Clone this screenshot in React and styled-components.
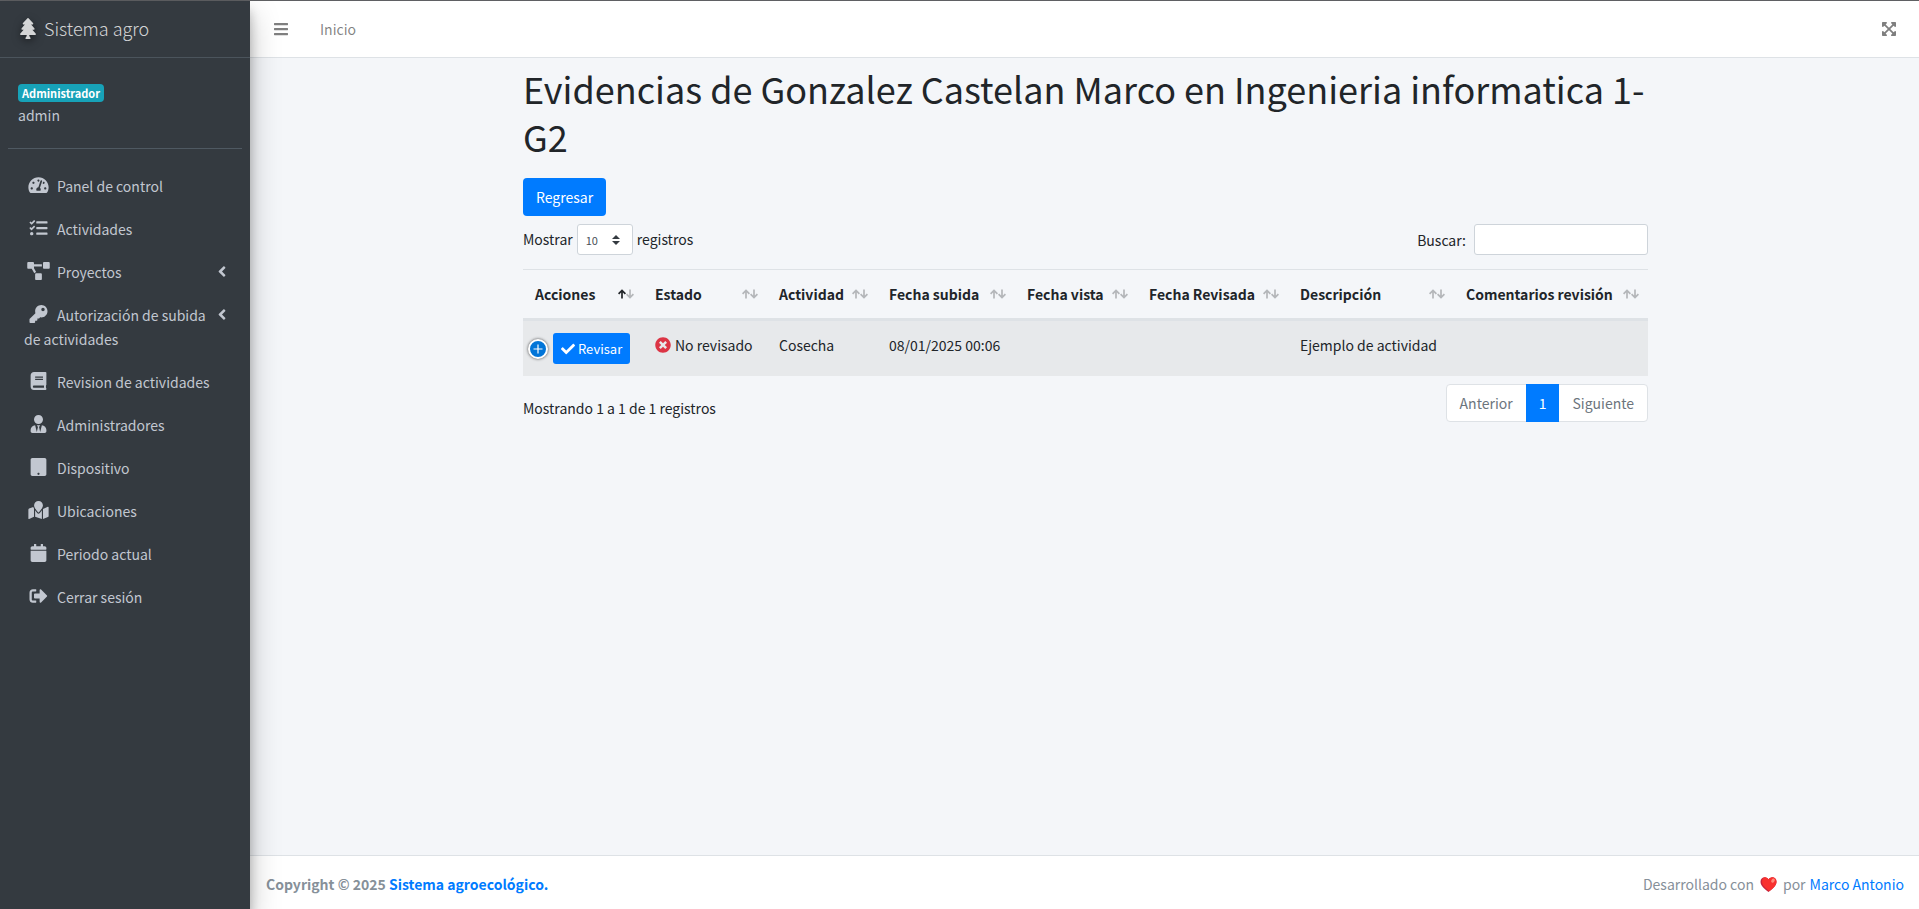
import React, { useState } from 'react'
import styled, { createGlobalStyle } from 'styled-components'
import {
    FaAngleLeft,
    FaBars,
    FaBook,
    FaCalendar,
    FaCheck,
    FaExpandArrowsAlt,
    FaKey,
    FaMapMarked,
    FaProjectDiagram,
    FaSignOutAlt,
    FaTablet,
    FaTachometerAlt,
    FaTasks,
    FaTimesCircle,
    FaTree,
    FaUserTie,
} from 'react-icons/fa'

const GlobalStyle = createGlobalStyle`
    *, *::before, *::after {
        box-sizing: border-box;
    }

    body {
        margin: 0;
        font-family: 'Source Sans Pro', 'Noto Sans CJK SC', 'Noto Sans', sans-serif;
        font-size: 14px;
        line-height: 24px;
        color: #212529;
        background: #f4f6f9;
    }

    button, input, select {
        font: inherit;
    }

    a {
        color: #007bff;
        text-decoration: none;
    }
`

const Wrapper = styled.div`
    display: flex;
    min-height: 100vh;
    border-top: 1px solid #5f6063;
`

/* Sidebar */

const Sidebar = styled.aside`
    position: relative;
    flex: 0 0 250px;
    background: #343a40;
    box-shadow: 0 14px 28px rgba(0, 0, 0, 0.25), 0 10px 10px rgba(0, 0, 0, 0.22);
`

const Brand = styled.a`
    display: flex;
    align-items: center;
    gap: 8px;
    height: 57px;
    padding: 0 20px 2px;
    border-bottom: 1px solid #4b545c;
    font-size: 18px;
    font-weight: 300;
    color: rgba(255, 255, 255, 0.8);

    svg {
        width: 16px;
        height: 21px;
        filter: drop-shadow(0 3px 4px rgba(0, 0, 0, 0.6));
    }
`

const UserPanel = styled.div`
    display: flex;
    flex-direction: column;
    align-items: flex-start;
    gap: 1px;
    margin: 0 8px;
    padding: 26px 10px 21px;
    border-bottom: 1px solid #4f5962;
    color: #c2c7d0;
`

const Badge = styled.span`
    padding: 0 4px;
    border-radius: 4px;
    font-size: 11px;
    font-weight: 700;
    line-height: 18px;
    color: #fff;
    background: #17a2b8;
`

const Menu = styled.ul`
    display: flex;
    flex-direction: column;
    gap: 3px;
    margin: 0;
    padding: 17px 8px;
    list-style: none;
`

const MenuLink = styled.a`
    display: flex;
    align-items: flex-start;
    padding: 8px 14px 8px 16px;
    color: #c2c7d0;
`

const MenuText = styled.span`
    flex: 1;
`

const MenuIcon = styled.span`
    display: inline-flex;
    justify-content: center;
    width: 28px;
    margin-right: 5px;
    vertical-align: -2px;

    svg {
        width: 23px;
        height: 18px;
    }
`

const Chevron = styled(FaAngleLeft)`
    width: 12px;
    height: 17px;
    margin-top: 3px;
`

/* Page */

const Page = styled.div`
    flex: 1;
    min-width: 0;
    display: flex;
    flex-direction: column;
`

const Navbar = styled.header`
    display: flex;
    align-items: center;
    justify-content: space-between;
    height: 57px;
    padding: 0 22px 0 23px;
    border-bottom: 1px solid #dee2e6;
    background: #fff;
`

const NavGroup = styled.nav`
    display: flex;
    align-items: center;
    gap: 31px;

    a {
        color: rgba(0, 0, 0, 0.5);
    }
`

const IconButton = styled.button`
    display: flex;
    padding: 0;
    border: 0;
    font-size: 16px;
    color: rgba(0, 0, 0, 0.5);
    background: none;
    cursor: pointer;
`

const Content = styled.main`
    flex: 1;
    width: 100%;
    max-width: 1141px;
    margin: 0 auto;
    padding: 6px 7px 6px 9px;
`

const Title = styled.h1`
    margin: 0 0 18px;
    font-size: 36px;
    font-weight: 400;
    line-height: 48px;
`

const Button = styled.button`
    display: inline-flex;
    align-items: center;
    gap: 3px;
    height: ${({ $small }) => ($small ? '31px' : '38px')};
    padding: ${({ $small }) => ($small ? '0 8px' : '0 13px')};
    border: 0;
    border-radius: ${({ $small }) => ($small ? '3px' : '4px')};
    font-size: ${({ $small }) => ($small ? '13px' : '14px')};
    color: #fff;
    background: #007bff;
    cursor: pointer;

    svg {
        width: 14px;
        height: 14px;
    }
`

const Row = styled.div`
    display: flex;
    flex-wrap: wrap;
    align-items: ${({ $align }) => $align || 'center'};
    justify-content: space-between;
    margin-top: 8px;
`

const LengthLabel = styled.label`
    display: flex;
    align-items: baseline;
    gap: 4px;
`

const LengthSelect = styled.select`
    appearance: none;
    width: 56px;
    height: 31px;
    padding: 0 8px;
    border: 1px solid #ced4da;
    border-radius: 3px;
    font-size: 11px;
    color: #495057;
    background: #fff url("data:image/svg+xml,%3csvg xmlns='http://www.w3.org/2000/svg' width='4' height='5' viewBox='0 0 4 5'%3e%3cpath fill='%23343a40' d='M2 0L0 2h4zm0 5L0 3h4z'/%3e%3c/svg%3e") right 12px center / 8px 10px no-repeat;
`

const SearchLabel = styled.label`
    display: flex;
    align-items: center;
    gap: 8px;
`

const SearchInput = styled.input`
    width: 174px;
    height: 31px;
    padding: 4px 8px;
    border: 1px solid #ced4da;
    border-radius: 3px;
    background: #fff;
`

const Table = styled.table`
    width: 100%;
    margin-top: 14px;
    border-collapse: separate;
    border-spacing: 0;
    table-layout: fixed;
`

const Th = styled.th`
    width: ${({ $width }) => $width}px;
    padding: 12px 9px 12px 12px;
    border-top: 1px solid #dee2e6;
    border-bottom: 2px solid #dee2e6;
    text-align: left;
    font-weight: 700;
    white-space: nowrap;
`

const ThContent = styled.div`
    display: flex;
    align-items: center;
    justify-content: space-between;
`

const Td = styled.td`
    height: 56px;
    padding: 12px;
    border-top: 1px solid #dee2e6;
    vertical-align: top;
    background: #e7e9eb;
`

const ActionsTd = styled(Td)`
    padding: 12px 5px;
`

const Actions = styled.div`
    display: flex;
    align-items: center;
    gap: 5px;
`

const ExpandButton = styled.button`
    display: flex;
    align-items: center;
    justify-content: center;
    width: 20px;
    height: 20px;
    padding: 0;
    border: 2px solid #fff;
    border-radius: 50%;
    color: #fff;
    background: #0275d8;
    box-shadow: 0 0 3px #444;
    cursor: pointer;
`

const Status = styled.span`
    display: flex;
    align-items: center;
    gap: 4px;
    white-space: nowrap;

    svg {
        width: 16px;
        height: 16px;
        color: #dc3545;
    }
`

const Info = styled.div`
    padding-top: 12px;
`

const Pagination = styled.nav`
    display: flex;
    border: 1px solid #dee2e6;
    border-radius: 4px;
    background: #fff;
`

const PageButton = styled.button`
    height: 38px;
    margin: -1px 0;
    padding: 0 13px;
    border: 0;
    color: ${({ $active }) => ($active ? '#fff' : '#6c757d')};
    background: ${({ $active }) => ($active ? '#007bff' : 'transparent')};
`

const Footer = styled.footer`
    display: flex;
    justify-content: space-between;
    padding: 16px 15px 13px 16px;
    border-top: 1px solid #dee2e6;
    color: #869099;
    background: #fff;
`

const Credit = styled.div`
    display: flex;
    align-items: center;
    gap: 4px;

    svg {
        margin: 0 2px;
    }
`

const menu = [
    { icon: FaTachometerAlt, text: 'Panel de control' },
    { icon: FaTasks, text: 'Actividades' },
    { icon: FaProjectDiagram, text: 'Proyectos', children: true },
    { icon: FaKey, text: 'Autorización de subida de actividades', children: true },
    { icon: FaBook, text: 'Revision de actividades' },
    { icon: FaUserTie, text: 'Administradores' },
    { icon: FaTablet, text: 'Dispositivo' },
    { icon: FaMapMarked, text: 'Ubicaciones' },
    { icon: FaCalendar, text: 'Periodo actual' },
    { icon: FaSignOutAlt, text: 'Cerrar sesión' },
]

const columns = [
    { text: 'Acciones', width: 120, sorted: true },
    { text: 'Estado', width: 124 },
    { text: 'Actividad', width: 110 },
    { text: 'Fecha subida', width: 138 },
    { text: 'Fecha vista', width: 122 },
    { text: 'Fecha Revisada', width: 151 },
    { text: 'Descripción', width: 166 },
    { text: 'Comentarios revisión', width: 194 },
]

const SortArrows = ({ sorted }) => (
    <svg width="16" height="10" viewBox="0 0 16 10" fill="none" stroke="#212529" strokeWidth="1.7" aria-hidden="true">
        <path d="M4 9.5V1.4M0.6 4.8L4 1.4L7.4 4.8" opacity={sorted ? 1 : 0.3} />
        <path d="M12 0.5V8.6M8.6 5.2L12 8.6L15.4 5.2" opacity="0.3" />
    </svg>
)

const Heart = () => (
    <svg width="17" height="15" viewBox="0 0 17 15" aria-hidden="true">
        <path fill="#c8243c" d="M8.5 15C4 11.500 0.500 8.600 0.500 4.700C0.500 2 2.400 0.300 4.700 0.300C6.400 0.300 7.800 1.200 8.500 2.600C9.200 1.200 10.600 0.300 12.300 0.300C14.600 0.300 16.500 2 16.500 4.700C16.500 8.600 13 11.500 8.500 15Z" />
        <path fill="#f8312f" d="M9.500 14C5.500 11 2 8.300 2 4.700C2 2 3.600 0.300 5.200 0.300C6.700 0.300 7.900 1.200 8.500 2.600C9.200 1.200 10.600 0.300 12.300 0.300C14.600 0.300 16.500 2 16.500 4.700C16.500 8.400 13.300 11.200 9.500 14Z" />
        <ellipse cx="13" cy="3.600" rx="1.600" ry="2.200" fill="#ff8a7a" transform="rotate(35 13 3.600)" />
    </svg>
)

const App = () => {
    const [search, setSearch] = useState('')
    const [length, setLength] = useState('10')

    return (
        <Wrapper>
            <GlobalStyle />
            <Sidebar>
                <Brand href="#">
                    <FaTree />
                    Sistema agro
                </Brand>
                <UserPanel>
                    <Badge>Administrador</Badge>
                    <span>admin</span>
                </UserPanel>
                <Menu>
                    {menu.map(({ icon: Icon, text, children }) => (
                        <li key={text}>
                            <MenuLink href="#">
                                <MenuText>
                                    <MenuIcon><Icon /></MenuIcon>
                                    {text}
                                </MenuText>
                                {children && <Chevron />}
                            </MenuLink>
                        </li>
                    ))}
                </Menu>
            </Sidebar>

            <Page>
                <Navbar>
                    <NavGroup>
                        <IconButton aria-label="Menú"><FaBars /></IconButton>
                        <a href="#">Inicio</a>
                    </NavGroup>
                    <IconButton aria-label="Pantalla completa"><FaExpandArrowsAlt /></IconButton>
                </Navbar>

                <Content>
                    <Title>Evidencias de Gonzalez Castelan Marco en Ingenieria informatica 1-G2</Title>
                    <Button>Regresar</Button>
                    <Row>
                        <LengthLabel>
                            Mostrar
                            <LengthSelect value={length} onChange={(e) => setLength(e.target.value)}>
                                <option>10</option>
                                <option>25</option>
                                <option>50</option>
                                <option>100</option>
                            </LengthSelect>
                            registros
                        </LengthLabel>
                        <SearchLabel>
                            Buscar:
                            <SearchInput
                                type="search"
                                value={search}
                                onChange={(e) => setSearch(e.target.value)}
                            />
                        </SearchLabel>
                    </Row>

                    <Table>
                        <thead>
                            <tr>
                                {columns.map(({ text, width, sorted }) => (
                                    <Th key={text} $width={width}>
                                        <ThContent>
                                            {text}
                                            <SortArrows sorted={sorted} />
                                        </ThContent>
                                    </Th>
                                ))}
                            </tr>
                        </thead>
                        <tbody>
                            <tr>
                                <ActionsTd>
                                    <Actions>
                                        <ExpandButton aria-label="Ver detalles">
                                            <svg width="10" height="10" viewBox="0 0 10 10" stroke="currentColor" strokeWidth="1.2">
                                                <path d="M5 0.500V9.500M0.500 5H9.500" />
                                            </svg>
                                        </ExpandButton>
                                        <Button $small><FaCheck />Revisar</Button>
                                    </Actions>
                                </ActionsTd>
                                <Td><Status><FaTimesCircle />No revisado</Status></Td>
                                <Td>Cosecha</Td>
                                <Td>08/01/2025 00:06</Td>
                                <Td />
                                <Td />
                                <Td>Ejemplo de actividad</Td>
                                <Td />
                            </tr>
                        </tbody>
                    </Table>

                    <Row $align="flex-start">
                        <Info>Mostrando 1 a 1 de 1 registros</Info>
                        <Pagination aria-label="Paginación">
                            <PageButton>Anterior</PageButton>
                            <PageButton $active>1</PageButton>
                            <PageButton>Siguiente</PageButton>
                        </Pagination>
                    </Row>
                </Content>

                <Footer>
                    <strong>Copyright © 2025 <a href="#">Sistema agroecológico.</a></strong>
                    <Credit>
                        Desarrollado con <Heart /> por <a href="#">Marco Antonio</a>
                    </Credit>
                </Footer>
            </Page>
        </Wrapper>
    )
}

export default App
